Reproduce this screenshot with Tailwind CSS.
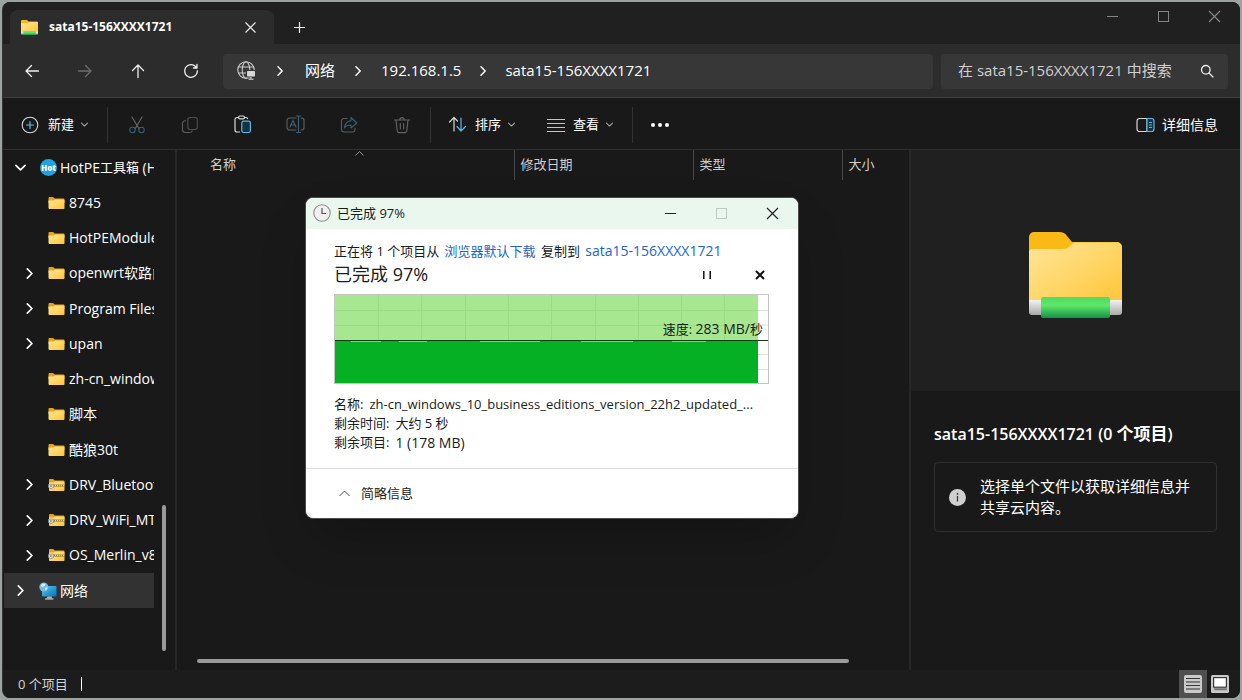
<!DOCTYPE html>
<html lang="zh-CN">

<head>
    <meta charset="UTF-8">
    <meta name="viewport" content="width=device-width, initial-scale=1.0">
    <title>sata15-156XXXX1721</title>
    <script src="https://cdn.jsdelivr.net/npm/@tailwindcss/browser@4"></script>
</head>

<body class="bg-[#9da3a1] font-['Open_Sans','Noto_Sans_CJK_SC',sans-serif] text-sm text-white">
    <!-- shared icons -->
    <svg class="absolute size-0" aria-hidden="true">
        <defs>
            <linearGradient id="gFolder" x1="0" y1="0" x2="1" y2="1">
                <stop offset="0" stop-color="#ffe69a" />
                <stop offset="1" stop-color="#ffc637" />
            </linearGradient>
            <linearGradient id="gPipe" x1="0" y1="0" x2="0" y2="1">
                <stop offset="0" stop-color="#4fdc62" />
                <stop offset=".4" stop-color="#5fe768" />
                <stop offset="1" stop-color="#16924a" />
            </linearGradient>
            <linearGradient id="gCap" x1="0" y1="0" x2="0" y2="1">
                <stop offset="0" stop-color="#f2f2f2" />
                <stop offset="1" stop-color="#a9a9a9" />
            </linearGradient>
            <linearGradient id="gScreen" x1="0" y1="0" x2="1" y2="1">
                <stop offset="0" stop-color="#4fd0f0" />
                <stop offset="1" stop-color="#0a6fb8" />
            </linearGradient>
        </defs>
        <symbol id="right" viewBox="0 0 10 10">
            <path d="M3 .8 7.2 5 3 9.2" fill="none" stroke="currentColor" stroke-width="1.5" stroke-linecap="round" stroke-linejoin="round" />
        </symbol>
        <symbol id="down" viewBox="0 0 10 10">
            <path d="M.8 3 5 7.2 9.2 3" fill="none" stroke="currentColor" stroke-width="1.5" stroke-linecap="round" stroke-linejoin="round" />
        </symbol>
        <symbol id="folder" viewBox="0 0 17 14">
            <path d="M.5 2a1 1 0 0 1 1-1h3.6l1.6 1.5h8.8a1 1 0 0 1 1 1V7H.5z" fill="#e8a317" />
            <path d="M.5 4.6h5L7 3.4h8.5a1 1 0 0 1 1 1V12a1 1 0 0 1-1 1h-14a1 1 0 0 1-1-1z" fill="url(#gFolder)" />
        </symbol>
        <symbol id="zip" viewBox="0 0 17 14">
            <path d="M1 2a1 1 0 0 1 1-1h3.2l1.5 1.5h8.8a1 1 0 0 1 1 1V7H1z" fill="#e8a317" />
            <path d="M1 4.6h4.6L7 3.4h8.5a1 1 0 0 1 1 1V12a1 1 0 0 1-1 1H2a1 1 0 0 1-1-1z" fill="url(#gFolder)" />
            <path d="M5 7.6h11.5" stroke="#8d7a45" stroke-width="2" />
            <path d="M5 7.6h11.5" stroke="#e9e2c8" stroke-width="1" stroke-dasharray="1 1" />
            <path d="M.4 6.2h5v3.4l-2.5 1.2L.4 9.6z" fill="#d9d9d9" stroke="#777" stroke-width=".6" />
            <circle cx="2.9" cy="8.1" r=".8" fill="#666" />
        </symbol>
        <symbol id="netfolder" viewBox="0 0 93 86">
            <path d="M0 5a5 5 0 0 1 5-5h25c4 0 6 1 8 4l5 6h45a5 5 0 0 1 5 5v20H0z" fill="#fbb915" />
            <path d="M0 21c0-3 1-4 4-4h29c4 0 6-1 9-4 2-2 4-2.500 6-2.500h40a5 5 0 0 1 5 5V72H0z" fill="url(#gFolder)" />
            <path d="M0 68h93v12a3 3 0 0 1-3 3H3a3 3 0 0 1-3-3z" fill="url(#gCap)" />
            <rect x="12" y="65" width="69" height="21" rx="2" fill="url(#gPipe)" />
        </symbol>
        <symbol id="netpc" viewBox="0 0 18 18">
            <rect x="3" y="4" width="14.500" height="10.500" rx="1" fill="url(#gScreen)" />
            <path d="M7.500 16.500h6l-1-2h-4z" fill="#9fb8c6" />
            <path d="M6 17h8.500" stroke="#d5dde2" stroke-width="1" />
            <circle cx="4.800" cy="5" r="4.500" fill="#78b9e6" />
            <path d="M2 3.200c1.500-2 3.500-2 4.500-1.200L5.600 4 3.500 5 2 4.500zM6 6l2.500-1c0 2-1 3-2.300 3.600z" fill="#d8eefb" />
        </symbol>
        <symbol id="hot" viewBox="0 0 17 17">
            <circle cx="8.500" cy="8.500" r="8.500" fill="#20a3e0" />
            <text x="8.500" y="11.500" text-anchor="middle" font-size="8" font-weight="800" fill="#fff">Hot</text>
        </symbol>
    </svg>

    <div class="p-[2px] h-screen min-h-[600px]">
        <div class="relative flex flex-col h-full rounded-lg overflow-hidden bg-[#191919] border-l border-[#333]">

            <!-- tabs -->
            <div class="flex items-end h-[42px] bg-[#202020] pl-[7px] shrink-0">
                <div class="flex items-center w-[264px] h-[34px] rounded-t-lg bg-[#2c2c2c] pl-[11px] pr-[16px]">
                    <svg class="w-[17px] h-[15px]" viewBox="0 0 93 86" preserveAspectRatio="none"><use href="#netfolder" /></svg>
                    <span class="ml-[11px] text-xs font-bold flex-1">sata15-156XXXX1721</span>
                    <button aria-label="关闭标签页">
                        <svg class="size-[15px]" viewBox="0 0 15 15" stroke="#e8e8e8" stroke-width="1.200"><path d="m2.500 2.500 10 10m0-10-10 10" /></svg>
                    </button>
                </div>
                <button class="size-[34px] flex items-center justify-center ml-[8px]" aria-label="新建标签页">
                    <svg class="size-[13px]" viewBox="0 0 13 13" stroke="#e8e8e8" stroke-width="1.200"><path d="M6.500 1v11M1 6.500h11" /></svg>
                </button>
                <div class="ml-auto self-start flex h-[29px] text-[#858585]">
                    <button class="w-[51px] flex items-center justify-center" aria-label="最小化">
                        <svg class="size-[13px]" viewBox="0 0 13 13" stroke="currentColor"><path d="M1 6.500h11" /></svg>
                    </button>
                    <button class="w-[51px] flex items-center justify-center" aria-label="最大化">
                        <svg class="size-[13px]" viewBox="0 0 13 13" stroke="currentColor" fill="none"><rect x="1.500" y="1.500" width="10" height="10" /></svg>
                    </button>
                    <button class="w-[51px] flex items-center justify-center" aria-label="关闭">
                        <svg class="size-[13px]" viewBox="0 0 13 13" stroke="currentColor" stroke-width="1.200"><path d="m1 1 11 11m0-11L1 12" /></svg>
                    </button>
                </div>
            </div>

            <!-- navigation -->
            <div class="flex items-center h-[54px] bg-[#2c2c2c] border-b border-[#3d3d3d] pl-[2px] pr-[12px] pt-[1px] shrink-0">
                <div class="flex text-[#f0f0f0]">
                    <button class="w-[53px] h-[34px] flex items-center justify-center" aria-label="后退">
                        <svg class="size-[16px]" viewBox="0 0 16 16" fill="none" stroke="currentColor" stroke-width="1.300" stroke-linecap="round" stroke-linejoin="round"><path d="M14.500 8H2m5.500-5.500L2 8l5.500 5.500" /></svg>
                    </button>
                    <button class="w-[53px] h-[34px] flex items-center justify-center text-[#6b6b6b]" aria-label="前进" disabled>
                        <svg class="size-[16px]" viewBox="0 0 16 16" fill="none" stroke="currentColor" stroke-width="1.300" stroke-linecap="round" stroke-linejoin="round"><path d="M1.500 8H14M8.500 2.500 14 8l-5.500 5.500" /></svg>
                    </button>
                    <button class="w-[53px] h-[34px] flex items-center justify-center" aria-label="向上">
                        <svg class="size-[16px]" viewBox="0 0 16 16" fill="none" stroke="currentColor" stroke-width="1.300" stroke-linecap="round" stroke-linejoin="round"><path d="M8 14.500V2M2.500 7.500 8 2l5.500 5.500" /></svg>
                    </button>
                    <button class="w-[53px] h-[34px] flex items-center justify-center" aria-label="刷新">
                        <svg class="size-[16px]" viewBox="0 0 16 16" fill="none" stroke="currentColor" stroke-width="1.300" stroke-linecap="round" stroke-linejoin="round"><path d="M14.400 8A6.400 6.400 0 1 1 12.800 3.700L14 5M14 1.500V5h-3.500" /></svg>
                    </button>
                </div>
                <nav class="flex-1 flex items-center h-[35px] rounded bg-[#373737] ml-[6px] pl-[14px] text-[15px]">
                    <svg class="size-[20px]" viewBox="0 0 20 20" fill="none" stroke="#cfcfcf" stroke-width="1.100">
                        <circle cx="9" cy="9" r="8.200" />
                        <ellipse cx="9" cy="9" rx="3.800" ry="8.200" />
                        <path d="M1.500 6h15M1.500 12h15" />
                        <rect x="9.500" y="9.500" width="9" height="6.500" rx="1" fill="#d8d8d8" stroke="#373737" />
                        <path d="M11.500 18.300h5M14 16v2" stroke="#d8d8d8" />
                    </svg>
                    <svg class="size-[10px] ml-[18px] mr-[20px]"><use href="#right" /></svg>
                    <a href="#">网络</a>
                    <svg class="size-[10px] mx-[18px]"><use href="#right" /></svg>
                    <a href="#">192.168.1.5</a>
                    <svg class="size-[10px] mx-[17px]"><use href="#right" /></svg>
                    <a href="#">sata15-156XXXX1721</a>
                </nav>
                <label class="flex items-center w-[287px] h-[35px] rounded bg-[#373737] ml-[8px] pl-[17px] pr-[14px]">
                    <input type="text" aria-label="搜索" placeholder="在 sata15-156XXXX1721 中搜索" class="flex-1 min-w-0 text-[15px] outline-none placeholder:text-[#d0d0d0]">
                    <svg class="size-[14px]" viewBox="0 0 14 14" fill="none" stroke="#e8e8e8" stroke-width="1.300" stroke-linecap="round"><circle cx="5.800" cy="5.800" r="4.300" /><path d="m9 9 4 4" /></svg>
                </label>
            </div>

            <!-- commands -->
            <div class="flex items-center h-[52px] border-b border-[#303030] pl-[18px] pr-[22px] pt-[2px] text-[13px] shrink-0">
                <button class="flex items-center w-[86px]">
                    <svg class="size-[18px]" viewBox="0 0 18 18" fill="none" stroke-linecap="round"><circle cx="9" cy="9" r="7.800" stroke="#d8d8d8" stroke-width="1.100" /><path d="M9 5.500v7M5.500 9h7" stroke="#5cb8e8" stroke-width="1.200" /></svg>
                    <span class="ml-[9px]">新建</span>
                    <svg class="size-[7px] ml-[7px] text-[#aaa]"><use href="#down" /></svg>
                </button>
                <div class="flex h-[36px] border-x border-[#333] pl-[2px] pr-[2px]">
                    <button class="w-[53px] flex items-center justify-center" aria-label="剪切" disabled>
                        <svg class="size-[18px]" viewBox="0 0 18 18" fill="none" stroke-width="1.100" stroke-linecap="round"><path d="M4 1l6.800 11.500M14 1 7.200 12.500" stroke="#696969" /><circle cx="4.500" cy="14" r="2.700" stroke="#32617a" /><circle cx="13.500" cy="14" r="2.700" stroke="#32617a" /></svg>
                    </button>
                    <button class="w-[53px] flex items-center justify-center" aria-label="复制" disabled>
                        <svg class="size-[18px]" viewBox="0 0 18 18" fill="none" stroke-width="1.100"><path d="M5 4.800H4A2.500 2.500 0 0 0 1.500 7.300v6.200A3 3 0 0 0 4.500 16.500H9a2.500 2.500 0 0 0 2.400-2" stroke="#5c5c5c" /><rect x="6.800" y="1.500" width="9.500" height="12" rx="2.200" stroke="#46525a" /></svg>
                    </button>
                    <button class="w-[53px] flex items-center justify-center" aria-label="粘贴">
                        <svg class="size-[19px]" viewBox="0 0 19 19" fill="none" stroke-width="1.200"><path d="M5.500 2.500H4A2 2 0 0 0 2 4.500V15a2 2 0 0 0 2 2h3M11.500 2.500H13a2 2 0 0 1 1.700 1.500" stroke="#d8d8d8" /><rect x="5.500" y="1" width="6" height="2.800" rx="1.400" stroke="#d8d8d8" /><rect x="8.800" y="6.200" width="8.600" height="11.300" rx="1.800" stroke="#5cb8e8" fill="#16313f" /></svg>
                    </button>
                    <button class="w-[53px] flex items-center justify-center" aria-label="重命名" disabled>
                        <svg class="size-[19px]" viewBox="0 0 19 19" fill="none" stroke-width="1.100" stroke-linecap="round"><path d="M10 3H3.500A2.500 2.500 0 0 0 1 5.500v7A2.500 2.500 0 0 0 3.500 15H10M15 3h.5A2.500 2.500 0 0 1 18 5.500v7a2.500 2.500 0 0 1-2.500 2.500H15" stroke="#606060" /><path d="M10.500 1h4M12.500 1v16.500M10.500 17.500h4M4 12l3-6.500L10 12M5 10h4" stroke="#3d6477" /></svg>
                    </button>
                    <button class="w-[53px] flex items-center justify-center" aria-label="共享" disabled>
                        <svg class="size-[18px]" viewBox="0 0 18 18" fill="none" stroke-width="1.100" stroke-linejoin="round" stroke-linecap="round"><path d="M7 2.500H4A2.500 2.500 0 0 0 1.500 5v8.500A2.500 2.500 0 0 0 4 16h8.500a2.500 2.500 0 0 0 2.500-2.500V12" stroke="#5c5c5c" /><path d="M11 1.500 16.800 7 11 12V9c-3.500 0-5.200 1-6.500 3 .3-4 2.500-6.800 6.500-7.200z" stroke="#32617a" /></svg>
                    </button>
                    <button class="w-[53px] flex items-center justify-center" aria-label="删除" disabled>
                        <svg class="size-[18px]" viewBox="0 0 18 18" fill="none" stroke="#656565" stroke-width="1.100" stroke-linecap="round"><path d="M1.500 4h15M6.800 3.800a2.200 2.200 0 0 1 4.400 0M3 4l1.200 11a1.800 1.800 0 0 0 1.800 1.600h6a1.800 1.800 0 0 0 1.800-1.600L15 4M7.300 7.500v5.500M10.700 7.500v5.500" /></svg>
                    </button>
                </div>
                <div class="flex items-center h-[36px] border-r border-[#333] pl-[17px] pr-[19px]">
                    <button class="flex items-center">
                        <svg class="size-[19px]" viewBox="0 0 19 19" fill="none" stroke-width="1.200" stroke-linecap="round" stroke-linejoin="round"><path d="M6 16V3M1.500 7 6 2.500l3.500 3.500" stroke="#d8d8d8" /><path d="M13 3v13M9 11.500l4 4.500 4.500-4.500" stroke="#5cb8e8" /></svg>
                        <span class="ml-[8px]">排序</span>
                        <svg class="size-[7px] ml-[7px] text-[#aaa]"><use href="#down" /></svg>
                    </button>
                    <button class="flex items-center ml-[32px]">
                        <svg class="size-[18px]" viewBox="0 0 18 18" stroke="#c4c4c4" stroke-width="1"><path d="M0 3.500h18M0 7.500h18M0 11.500h18M0 15.500h18" /></svg>
                        <span class="ml-[8px]">查看</span>
                        <svg class="size-[7px] ml-[7px] text-[#aaa]"><use href="#down" /></svg>
                    </button>
                </div>
                <button class="ml-[17px]" aria-label="更多">
                    <svg class="w-[20px] h-[6px]" viewBox="0 0 20 6" fill="#fff"><circle cx="3" cy="3" r="2" /><circle cx="10" cy="3" r="2" /><circle cx="17" cy="3" r="2" /></svg>
                </button>
                <button class="flex items-center ml-auto">
                    <svg class="w-[19px] h-[16px]" viewBox="0 0 19 16" fill="none" stroke-width="1.200"><path d="M11 1.500H3.500a2.500 2.500 0 0 0-2.500 2.500v8a2.500 2.500 0 0 0 2.500 2.500H11z" stroke="#d8d8d8" /><path d="M11 1.500h4.500A2.500 2.500 0 0 1 18 4v8a2.500 2.500 0 0 1-2.500 2.500H11z" stroke="#5cb8e8" fill="#16313f" /><path d="M13 5.500h3M13 8h3M13 10.500h3" stroke="#5cb8e8" /></svg>
                    <span class="ml-[7px] text-[14px]">详细信息</span>
                </button>
            </div>

            <div class="flex flex-1 min-h-0">
                <!-- tree -->
                <div class="flex w-[174px] shrink-0 border-r-2 border-[#272727]">
                    <ul id="tree" class="w-[151px] h-[458px] pl-[1px] flex flex-col justify-between overflow-hidden"></ul>
                    <div class="self-end w-[4px] h-[146px] rounded-full bg-[#9a9a9a] ml-[8px] mb-[19px]"></div>
                </div>

                <!-- files -->
                <div class="relative flex-1 flex flex-col min-w-0">
                    <table class="w-full table-fixed text-[13px] text-[#cfcfcf]">
                        <thead>
                            <tr class="h-[30px] text-left">
                                <th class="pl-[33px] pb-[2px] font-normal">名称</th>
                                <th class="w-[179px] pl-[6px] pb-[2px] font-normal border-l border-[#4a4a4a]">修改日期</th>
                                <th class="w-[149px] pl-[6px] pb-[2px] font-normal border-l border-[#4a4a4a]">类型</th>
                                <th class="w-[67px] pl-[6px] pb-[2px] font-normal border-l border-[#4a4a4a]">大小</th>
                            </tr>
                        </thead>
                    </table>
                    <svg class="absolute top-[1px] left-[178px] w-[9px] h-[5px]" viewBox="0 0 9 5" fill="none" stroke="#999"><path d="m.5 4.500 4-4 4 4" /></svg>
                    <div class="mt-auto mb-[7px] ml-[20px] mr-[60px] h-[4px] rounded-full bg-[#9a9a9a]"></div>
                </div>

                <!-- details -->
                <aside class="w-[331px] shrink-0 border-l-2 border-[#272727]">
                    <div class="h-[241px] bg-[#202020] flex items-center justify-center">
                        <svg class="w-[93px] h-[86px] mt-[8px]"><use href="#netfolder" /></svg>
                    </div>
                    <div class="px-[23px] pt-[31px]">
                        <h2 class="text-[16px] leading-[24px] font-semibold">sata15-156XXXX1721 (0 <span class="text-[17px] font-bold">个项目</span>)</h2>
                        <div class="flex items-center h-[70px] mt-[16px] rounded border border-[#2f2f2f] pl-[14px] pr-[12px]">
                            <svg class="size-[17px] shrink-0" viewBox="0 0 17 17"><circle cx="8.500" cy="8.500" r="8.500" fill="#cfcfcf" /><path d="M8.500 7v5.500" stroke="#333" stroke-width="1.200" /><circle cx="8.500" cy="4.900" r=".9" fill="#333" /></svg>
                            <p class="ml-[14px] text-[15px] leading-[21px]">选择单个文件以获取详细信息并共享云内容。</p>
                        </div>
                    </div>
                </aside>
            </div>

            <!-- status -->
            <div class="flex items-center h-[28px] pl-[15px] shrink-0 bg-[#1c1c1c] text-[13px] text-[#d5d5d5]">
                <span>0 个项目</span>
                <span class="w-[1px] h-[14px] bg-white ml-[13px]"></span>
                <div class="ml-auto flex h-full pr-[7px]">
                    <button class="w-[28px] bg-[#4f4f4f] flex items-center justify-center" aria-label="详细信息视图">
                        <svg class="size-[18px]" viewBox="0 0 18 18"><rect width="18" height="18" rx="2" fill="#c9c9c9" /><path d="M2 3.500h14M2 7h14M2 10.500h14M2 14h14" stroke="#333" stroke-width="1.200" /></svg>
                    </button>
                    <button class="w-[26px] flex items-center justify-center" aria-label="大缩略图视图">
                        <svg class="size-[18px]" viewBox="0 0 17 17"><rect width="17" height="17" rx="1.500" fill="#c9c9c9" /><rect x="2.500" y="2.500" width="12" height="9" fill="#fff" stroke="#222" /><path d="M3 13.500h12" stroke="#777" stroke-width="2" /></svg>
                    </button>
                </div>
            </div>
        </div>
    </div>

    <!-- copy dialog -->
    <div class="absolute left-[305px] top-[197px] w-[494px] rounded-lg overflow-hidden bg-white text-[#1b1b1b] text-[13px] border border-[#4a4a4a] shadow-2xl">
        <div class="flex items-center h-[31px] bg-[#e9f7ee] pl-[7px] pb-[1px]">
            <svg class="size-[18px]" viewBox="0 0 18 18"><circle cx="9" cy="9" r="8.200" fill="#f1eff0" stroke="#8d8d8d" stroke-width="1.100" /><path d="M9 4v5.500h4" fill="none" stroke="#555" stroke-width="1.200" /></svg>
            <span class="ml-[6px]">已完成 97%</span>
            <div class="ml-auto flex h-full">
                <button class="w-[51px] flex items-center justify-center" aria-label="最小化">
                    <svg class="size-[13px]" viewBox="0 0 13 13" stroke="#222"><path d="M1 6.500h11" /></svg>
                </button>
                <button class="w-[51px] flex items-center justify-center" aria-label="最大化" disabled>
                    <svg class="size-[13px]" viewBox="0 0 13 13" stroke="#bccac1" fill="none"><rect x="1.500" y="1.500" width="10" height="10" /></svg>
                </button>
                <button class="w-[51px] flex items-center justify-center" aria-label="关闭">
                    <svg class="size-[13px]" viewBox="0 0 13 13" stroke="#222" stroke-width="1.200"><path d="m1 1 11 11m0-11L1 12" /></svg>
                </button>
            </div>
        </div>
        <div class="pl-[28px] pr-[29px] pt-[12px] pb-[16px]">
            <p class="leading-[20px]">正在将 1 个项目从 <a href="#" class="mx-[2px] text-[#1a66c9]">浏览器默认下载</a> 复制到 <a href="#" class="mx-[2px] text-[#1a66c9] text-[14px]">sata15-156XXXX1721</a></p>
            <div class="flex items-center h-[28px] pr-[4px]">
                <span class="text-[18px] flex-1">已完成 97%</span>
                <button aria-label="暂停" class="mr-[43px]">
                    <svg class="size-[10px]" viewBox="0 0 10 10" stroke="#111" stroke-width="1.500"><path d="M1.800 1v8M8.200 1v8" /></svg>
                </button>
                <button aria-label="取消">
                    <svg class="size-[10px]" viewBox="0 0 10 10" stroke="#111" stroke-width="2"><path d="m1 1 8 8m0-8L1 9" /></svg>
                </button>
            </div>
            <div class="relative border border-[#c5c5c5] mt-[5px]">
                <svg class="block w-full h-[88px]" viewBox="0 0 433 88" preserveAspectRatio="none">
                    <path d="M0 15.500h433M0 30h433M0 59.500h433M0 74.500h433" stroke="#d5e8d0" />
                    <rect width="423" height="88" fill="#a6e78f" />
                    <path d="M43.500 0v46M86.500 0v46M130.500 0v46M173.500 0v46M216.500 0v46M260.500 0v46M303.500 0v46M346.500 0v46M389.500 0v46M0 15.500h423M0 30.500h423" stroke="#9adc86" />
                    <rect y="46" width="423" height="42" fill="#06b025" />
                    <path d="M0 45.500h433" stroke="#173b16" />
                    <path d="M16 46.500h30M64 46.500h28M145 46.500h60M246 46.500h52M337 46.500h34" stroke="#7fd26c" />
                </svg>
                <span class="absolute right-[5px] top-[24px] leading-[20px]">速度: <span class="text-[14px]">283 MB/</span>秒</span>
            </div>
            <dl class="mt-[11px] leading-[19px]">
                <div class="flex"><dt class="shrink-0">名称:</dt><dd class="ml-[6px] whitespace-nowrap">zh-cn_windows_10_business_editions_version_22h2_updated_...</dd></div>
                <div class="flex"><dt>剩余时间:</dt><dd class="ml-[6px]">大约 5 秒</dd></div>
                <div class="flex"><dt>剩余项目:</dt><dd class="ml-[6px] text-[14px]">1 (178 MB)</dd></div>
            </dl>
        </div>
        <div class="flex items-center h-[50px] border-t border-[#dfdfdf] pl-[33px]">
            <button class="flex items-center">
                <svg class="w-[11px] h-[7px]" viewBox="0 0 11 7" fill="none" stroke="#555"><path d="m.5 6 5-5 5 5" /></svg>
                <span class="ml-[11px]">简略信息</span>
            </button>
        </div>
    </div>
</body>
<script>
    const items = [
        { name: '8745', icon: 'folder' },
        { name: 'HotPEModule', icon: 'folder' },
        { name: 'openwrt软路由', icon: 'folder', more: true },
        { name: 'Program Files', icon: 'folder', more: true },
        { name: 'upan', icon: 'folder', more: true },
        { name: 'zh-cn_windows', icon: 'folder' },
        { name: '脚本', icon: 'folder' },
        { name: '酷狼30t', icon: 'folder' },
        { name: 'DRV_Bluetooth', icon: 'zip', more: true },
        { name: 'DRV_WiFi_MTK', icon: 'zip', more: true },
        { name: 'OS_Merlin_v8', icon: 'zip', more: true },
    ];

    let html = `
        <li class="flex items-center h-[35px] pl-[11px] whitespace-nowrap">
            <svg class="size-[11px] shrink-0"><use href="#down" /></svg>
            <svg class="size-[17px] shrink-0 ml-[14px] mr-[3px]"><use href="#hot" /></svg>HotPE<span class="text-[13px]">工具箱</span>&nbsp;(H:)
        </li>`;
    for (const i of items) {
        html += `
        <li class="flex items-center h-[35px] pl-[20px] whitespace-nowrap">
            <svg class="size-[11px] shrink-0 ${i.more ? '' : 'invisible'}"><use href="#right" /></svg>
            <svg class="w-[17px] h-[14px] shrink-0 ml-[13px] mr-[4px]"><use href="#${i.icon}" /></svg>${i.name}
        </li>`;
    }
    html += `
        <li class="flex items-center h-[35px] pl-[11px] whitespace-nowrap bg-[#323232]">
            <svg class="size-[11px] shrink-0"><use href="#right" /></svg>
            <svg class="size-[18px] shrink-0 ml-[13px] mr-[3px]"><use href="#netpc" /></svg>网络
        </li>`;
    document.getElementById('tree').innerHTML = html;
</script>

</html>
